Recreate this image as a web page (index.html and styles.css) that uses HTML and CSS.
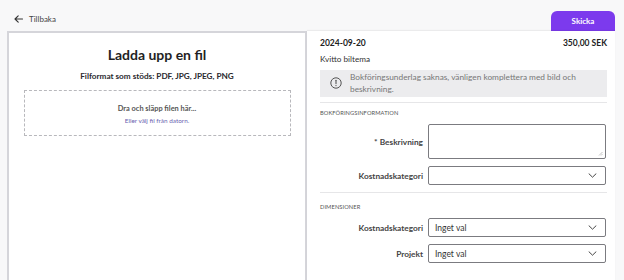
FILE: index.html
```html
<!DOCTYPE html>
<html lang="sv">
<head>
<meta charset="utf-8">
<link rel="stylesheet" href="styles.css">
</head>
<body>
<div class="page">
  <header class="topbar">
    <a class="back">
      <svg class="back-icon" width="9" height="8" viewBox="0 0 9 8"><path d="M8.5 4H1M4.2 0.8L1 4l3.2 3.2" fill="none" stroke="#333" stroke-width="1.1" stroke-linecap="round" stroke-linejoin="round"/></svg>
      <span>Tillbaka</span>
    </a>
    <button class="send">Skicka</button>
  </header>
  <main class="content">
    <section class="upload">
      <h1 class="upload-title">Ladda upp en fil</h1>
      <p class="formats">Filformat som stöds: PDF, JPG, JPEG, PNG</p>
      <div class="dropzone">
        <div class="drop-main">Dra och släpp filen här...</div>
        <div class="drop-sub">Eller välj fil från datorn.</div>
      </div>
    </section>
    <section class="details">
      <div class="row-head">
        <span class="date">2024-09-20</span>
        <span class="amount">350,00 SEK</span>
      </div>
      <div class="desc">Kvitto biltema</div>
      <div class="alert">
        <svg class="alert-icon" width="12" height="12" viewBox="0 0 12 12"><circle cx="6" cy="6" r="5.2" fill="none" stroke="#555" stroke-width="1"/><path d="M6 3.2v3.4" stroke="#555" stroke-width="1.1" stroke-linecap="round"/><circle cx="6" cy="8.6" r="0.65" fill="#555"/></svg>
        <span>Bokföringsunderlag saknas, vänligen komplettera med bild och beskrivning.</span>
      </div>
      <div class="group group-first">
        <div class="group-title">BOKFÖRINGSINFORMATION</div>
        <div class="field">
          <label class="label">* Beskrivning</label>
          <div class="textarea"><svg class="grip" width="5" height="5" viewBox="0 0 5 5"><path d="M4.5 1L1 4.5M4.5 3L3 4.5" stroke="#aaa" stroke-width="0.7"/></svg></div>
        </div>
        <div class="field">
          <label class="label">Kostnadskategori</label>
          <div class="select"><span></span><svg class="chev" width="9" height="5" viewBox="0 0 9 5"><path d="M1 0.8l3.5 3.4 3.5-3.4" fill="none" stroke="#444" stroke-width="1" stroke-linecap="round" stroke-linejoin="round"/></svg></div>
        </div>
      </div>
      <div class="group group-second">
        <div class="group-title">DIMENSIONER</div>
        <div class="field">
          <label class="label">Kostnadskategori</label>
          <div class="select"><span>Inget val</span><svg class="chev" width="9" height="5" viewBox="0 0 9 5"><path d="M1 0.8l3.5 3.4 3.5-3.4" fill="none" stroke="#444" stroke-width="1" stroke-linecap="round" stroke-linejoin="round"/></svg></div>
        </div>
        <div class="field">
          <label class="label">Projekt</label>
          <div class="select"><span>Inget val</span><svg class="chev" width="9" height="5" viewBox="0 0 9 5"><path d="M1 0.8l3.5 3.4 3.5-3.4" fill="none" stroke="#444" stroke-width="1" stroke-linecap="round" stroke-linejoin="round"/></svg></div>
        </div>
      </div>
    </section>
  </main>
</div>
</body>
</html>
```
FILE: styles.css
```css
* { box-sizing: border-box; }
html, body { margin: 0; padding: 0; }
body {
  background: #f8f8f9;
  font-family: "Lato", "Noto Sans", sans-serif;
  color: #222;
  width: 624px;
  height: 280px;
  overflow: hidden;
}
.page { padding: 0 9px 0 7px; }
.topbar {
  height: 31px;
  display: flex;
  align-items: flex-end;
  justify-content: space-between;
}
.back {
  display: flex;
  align-items: center;
  gap: 6px;
  font-size: 8px;
  color: #444;
  margin: 0 0 7px 7px;
}
.send {
  width: 64px;
  height: 20px;
  border: none;
  background: #7c3aed;
  color: #fff;
  font-family: inherit;
  font-weight: 700;
  font-size: 8px;
  border-radius: 6px 6px 0 0;
  padding: 0;
}
.content {
  display: flex;
  height: 260px;
}
.upload {
  width: 300px;
  background: #fff;
  border: 2px solid #d5d5da;
  border-bottom: none;
  padding-top: 13px;
  display: flex;
  flex-direction: column;
  align-items: center;
}
.upload-title {
  margin: 0;
  font-size: 14px;
  font-weight: 700;
  color: #1f1f24;
  line-height: 17px;
}
.formats {
  margin: 8px 0 0;
  font-size: 8.2px;
  font-weight: 700;
  color: #2a2a2e;
}
.dropzone {
  margin-top: 9px;
  width: 267px;
  height: 46px;
  border: 1px dashed #b8b8bc;
  display: flex;
  flex-direction: column;
  align-items: center;
  justify-content: center;
  padding-top: 2px;
}
.drop-main { font-size: 7.4px; font-weight: 700; color: #555; }
.drop-sub { margin-top: 4px; font-size: 6.4px; color: #6a5fb0; }
.details {
  width: 308px;
  background: #fff;
  padding: 7px 8px 0 13px;
  box-shadow: 0 -1px 1px rgba(0,0,0,0.05);
}
.row-head {
  display: flex;
  justify-content: space-between;
  font-size: 8.5px;
  font-weight: 700;
  color: #222;
}
.desc {
  margin-top: 6px;
  font-size: 8.2px;
  color: #333;
}
.alert {
  margin-top: 6px;
  background: #ececee;
  padding: 1px 8px 2px 10px;
  display: flex;
  gap: 8px;
  align-items: center;
  font-size: 8.3px;
  line-height: 12px;
  color: #777;
}
.alert-icon { flex: none; }
.group {
  border-top: 1px solid #e6e6e8;
}
.group-first { margin-top: 5px; padding-top: 6px; }
.group-second { margin-top: 0; padding-top: 10px; }
.group-title {
  font-size: 5.7px;
  color: #555;
  letter-spacing: 0.1px;
  margin-bottom: 8px;
}
.field {
  display: flex;
  align-items: center;
  gap: 5px;
  margin-bottom: 7px;
}
.label {
  width: 103px;
  text-align: right;
  font-size: 8.3px;
  font-weight: 700;
  color: #444;
}
.textarea {
  width: 178px;
  height: 35px;
  border: 1px solid #7b7b80;
  border-radius: 2px;
  position: relative;
}
.grip { position: absolute; right: 2px; bottom: 2px; }
.select {
  width: 178px;
  height: 19px;
  border: 1px solid #7b7b80;
  border-radius: 2px;
  display: flex;
  align-items: center;
  justify-content: space-between;
  padding: 0 8px 0 6px;
  font-size: 8.5px;
  color: #333;
}
```
